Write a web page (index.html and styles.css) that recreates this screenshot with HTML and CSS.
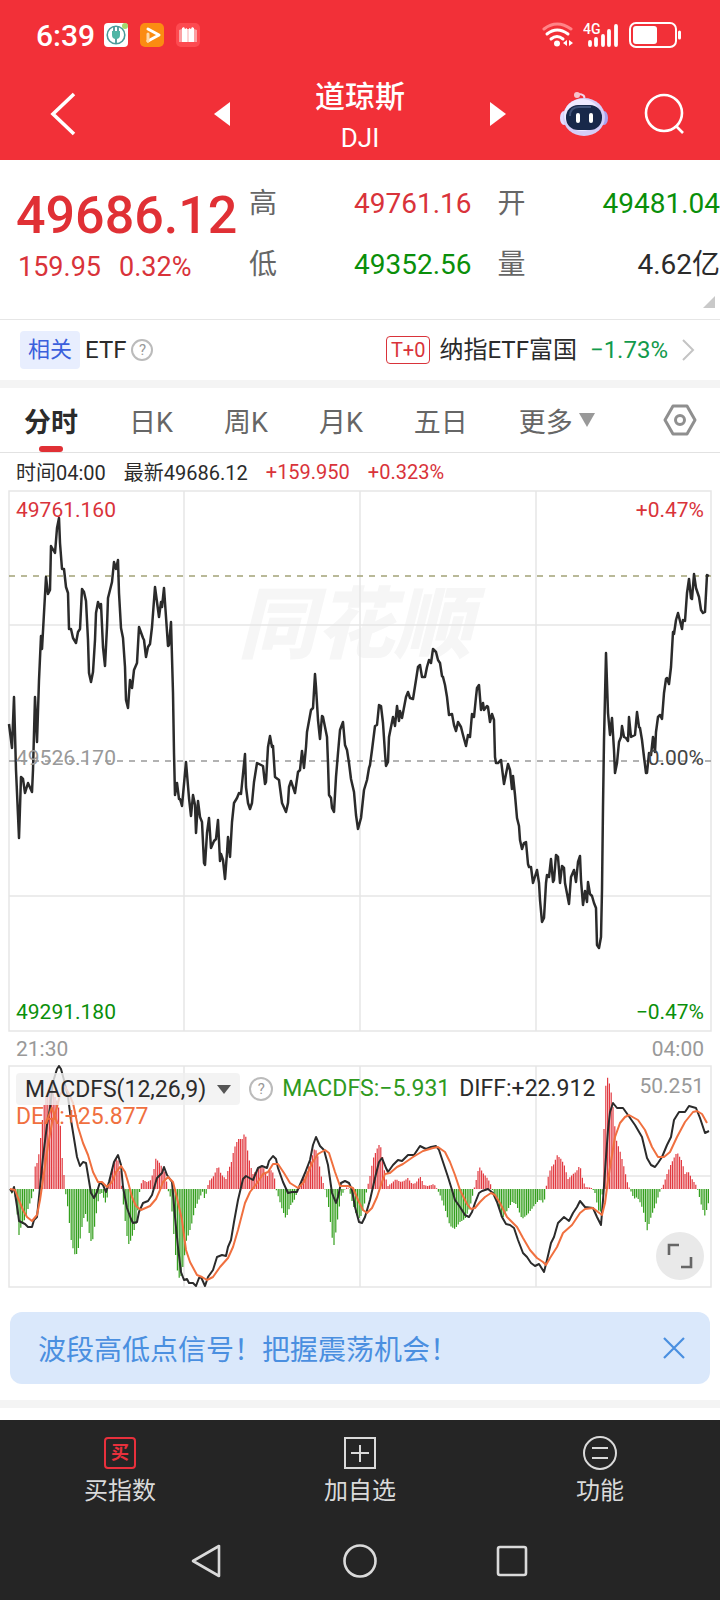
FILE: index.html
```html
<!DOCTYPE html>
<html lang="zh-CN">
<head>
  <meta charset="UTF-8">
  <meta name="viewport" content="width=device-width, initial-scale=1.0">
  <title>道琼斯 DJI</title>
  <link rel="stylesheet" href="styles.css">
</head>
<body>
  <!-- Header -->
  <header class="header">
    <div class="status-bar">
      <span class="clock">6:39</span>
      <svg class="app-icon" viewBox="0 0 24 24">
        <rect width="24" height="24" rx="4" fill="#fff"/>
        <circle cx="12" cy="12" r="8.8" fill="none" stroke="#4b9a9a" stroke-width="1.6"/>
        <path d="M10 3v6M14 3v6M12 10v11" stroke="#4b9a9a" stroke-width="1.8"/>
        <path d="M8 8h8v4a4 4 0 0 1-8 0z" fill="#4fb5a5"/>
        <circle cx="21" cy="3" r="3" fill="#a5d86e"/>
      </svg>
      <svg class="app-icon" viewBox="0 0 24 24">
        <rect width="24" height="24" rx="5" fill="#fb8c12"/>
        <path d="M8 6l11 6-11 6" fill="none" stroke="#fff" stroke-width="3" stroke-linejoin="round" stroke-linecap="round"/>
        <path d="M8 11v7" stroke="#ffd9a8" stroke-width="3" stroke-linecap="round"/>
      </svg>
      <svg class="app-icon" viewBox="0 0 24 24">
        <rect width="24" height="24" rx="5" fill="#fd4a50"/>
        <path d="M3 7l3-1v13H3zM21 7l-3-1v13h3z" fill="#fba0a3"/>
        <path d="M6 5l2-1 1 2 2-1v14H6zM18 5l-2-1-1 2-2-1v14h5z" fill="#fff"/>
        <path d="M11 6h2v13h-2z" fill="#fcd5d6"/>
      </svg>
      <div class="status-right">
        <svg width="32" height="26" viewBox="0 0 32 26" fill="none" stroke="#fff" stroke-width="3" stroke-linecap="round">
          <path d="M2 7q13-10 27 0" stroke="#ff8488"/>
          <path d="M5 12q10-8 21 0M9 17q6-5 12 0"/>
          <circle cx="15" cy="21.500" r="3" fill="#fff" stroke="none"/>
          <path d="M25 18v6l-4-3zM27 18v6l4-3z" fill="#fff" stroke="none"/>
        </svg>
        <svg width="36" height="32" viewBox="0 -3 36 32">
          <text x="0" y="12" class="net-label">4G</text>
          <path d="M7 20v3M13 17v6M20 14v9M26 9v14M33 4v19" stroke="#fff" stroke-width="3.800" stroke-linecap="round"/>
        </svg>
        <svg width="54" height="26" viewBox="0 0 54 26">
          <rect x="2" y="1" width="46" height="24" rx="6" fill="none" stroke="#fff" stroke-width="2"/>
          <rect x="5" y="4" width="24" height="18" rx="3" fill="#fff"/>
          <path d="M51.500 10v6" stroke="#fff" stroke-width="3" stroke-linecap="round"/>
        </svg>
      </div>
    </div>
    <div class="title-bar">
      <button class="icon-btn back" aria-label="返回">
        <svg width="28" height="44" viewBox="0 0 28 44"><path d="M24 2L3 22l21 20" fill="none" stroke="#fff" stroke-width="3.600"/></svg>
      </button>
      <button class="icon-btn" aria-label="上一个">
        <svg width="16" height="24" viewBox="0 0 16 24"><path d="M16 0v24L0 12z" fill="#fff"/></svg>
      </button>
      <div class="title">
        <h1>道琼斯</h1>
        <span class="symbol">DJI</span>
      </div>
      <button class="icon-btn" aria-label="下一个">
        <svg width="16" height="24" viewBox="0 0 16 24"><path d="M0 0v24l16-12z" fill="#fff"/></svg>
      </button>
      <div class="title-tools">
        <button class="icon-btn" aria-label="智能助手">
          <svg width="48" height="46" viewBox="0 0 48 46">
            <path d="M24 9q2-6-6-6" fill="none" stroke="#f0d5ec" stroke-width="2"/>
            <circle cx="17" cy="4" r="3" fill="#f6c3cd"/>
            <ellipse cx="4" cy="27" rx="4" ry="7" fill="#e4ddff"/>
            <ellipse cx="44" cy="27" rx="4" ry="7" fill="#a9a2ee"/>
            <ellipse cx="24" cy="26" rx="21" ry="19" fill="#d5cef8"/>
            <ellipse cx="22" cy="24" rx="18" ry="16" fill="#efeaff"/>
            <rect x="6" y="14" width="36" height="25" rx="12" fill="#18284a"/>
            <path d="M10 25q0-9 9-9h12" fill="none" stroke="#3f5178" stroke-width="2"/>
            <rect x="16" y="22" width="4" height="10" rx="2" fill="#fff"/>
            <rect x="29" y="22" width="4" height="10" rx="2" fill="#fff"/>
          </svg>
        </button>
        <button class="icon-btn" aria-label="搜索">
          <svg width="42" height="42" viewBox="0 0 42 42" fill="none" stroke="#fff" stroke-width="2.600"><circle cx="20" cy="20" r="18"/><path d="M32 33l7 7"/></svg>
        </button>
      </div>
    </div>
  </header>

  <main>
    <!-- Quote -->
    <section class="quote">
      <div class="quote-main">
        <div class="price">49686.12</div>
        <div class="change"><span>159.95</span><span>0.32%</span></div>
      </div>
      <dl class="quote-list">
        <div><dt>高</dt><dd class="up">49761.16</dd></div>
        <div><dt>开</dt><dd class="down">49481.04</dd></div>
        <div><dt>低</dt><dd class="down">49352.56</dd></div>
        <div><dt>量</dt><dd>4.62亿</dd></div>
      </dl>
      <svg class="corner" width="12" height="12" viewBox="0 0 12 12"><path d="M12 0v12H0z" fill="#c9c9c9"/></svg>
    </section>

    <!-- Related ETF -->
    <section class="related">
      <span class="tag">相关</span>
      <span>ETF</span>
      <button class="help" aria-label="ETF说明">?</button>
      <a class="etf-link" href="#etf">
        <span class="t0">T+0</span>
        <span>纳指ETF富国</span>
        <span class="etf-change">−1.73%</span>
        <svg width="14" height="24" viewBox="0 0 14 24"><path d="M2 2l10 10L2 22" fill="none" stroke="#c4c4c4" stroke-width="2"/></svg>
      </a>
    </section>

    <!-- Period tabs -->
    <nav class="tabs">
      <button class="tab active">分时</button>
      <button class="tab">日K</button>
      <button class="tab">周K</button>
      <button class="tab">月K</button>
      <button class="tab">五日</button>
      <button class="tab">更多<svg width="16" height="14" viewBox="0 0 16 14"><path d="M0 0h16L8 14z" fill="#999"/></svg></button>
      <button class="tab settings" aria-label="设置">
        <svg width="34" height="32" viewBox="0 0 34 32" fill="none" stroke="#8f8f8f" stroke-width="3" stroke-linejoin="round"><path d="M10 2h14l8 14-8 14H10L2 16z"/><circle cx="17" cy="16" r="4.500"/></svg>
      </button>
    </nav>

    <div class="info">
      <span>时间04:00</span>
      <span>最新49686.12</span>
      <span class="up">+159.950</span>
      <span class="up">+0.323%</span>
    </div>

    <!-- Price chart -->
    <svg class="chart" viewBox="0 0 720 542">
      <text x="238" y="162" class="watermark">同花顺</text>
      <path class="grid" d="M9 1H711V541H9zM184 1V541M360 1V541M536 1V541M9 135H711M9 406H711"/>
      <path class="dash last" d="M9 86H711"/>
      <path class="dash" d="M9 271H711"/>
      <polyline id="price-line" class="line price-line"/>
      <text x="16" y="27" class="label up">49761.160</text>
      <text x="16" y="275" class="label muted">49526.170</text>
      <text x="16" y="529" class="label down">49291.180</text>
      <text x="704" y="27" class="label end up">+0.47%</text>
      <text x="704" y="275" class="label end">0.00%</text>
      <text x="704" y="529" class="label end down">−0.47%</text>
    </svg>
    <div class="axis"><span>21:30</span><span>04:00</span></div>

    <!-- MACD chart -->
    <section class="macd">
      <svg class="chart" viewBox="0 0 720 223">
        <path class="grid" d="M9 1H711V222H9zM184 1V222M360 1V222M536 1V222M9 111H711"/>
        <path id="bars-up" class="bars bars-up"/>
        <path id="bars-down" class="bars bars-down"/>
        <polyline id="diff-line" class="line"/>
        <polyline id="dea-line" class="line dea-line"/>
        <text x="704" y="28" class="label end muted">50.251</text>
      </svg>
      <div class="legend">
        <button class="indicator">MACDFS(12,26,9)<svg width="14" height="9" viewBox="0 0 14 9"><path d="M0 0h14L7 9z" fill="#555"/></svg></button>
        <button class="help" aria-label="指标说明">?</button>
        <span class="macd-value">MACDFS:−5.931</span>
        <span>DIFF:+22.912</span>
        <span class="dea-value">DEA:+25.877</span>
      </div>
      <button class="expand" aria-label="全屏">
        <svg width="26" height="26" viewBox="0 0 26 26" fill="none" stroke="#666" stroke-width="2.600"><path d="M2 12V2h10M24 14v10H14"/></svg>
      </button>
    </section>

    <!-- Signal banner -->
    <div class="banner">
      <a href="#signal">波段高低点信号！把握震荡机会！</a>
      <button class="icon-btn" aria-label="关闭">
        <svg width="22" height="22" viewBox="0 0 22 22"><path d="M1 1l20 20M21 1L1 21" stroke="#4a8fe0" stroke-width="2.200"/></svg>
      </button>
    </div>
    <div class="divider"></div>
  </main>

  <!-- Bottom bar -->
  <footer class="footer">
    <nav class="actions">
      <button class="action">
        <svg width="34" height="34" viewBox="0 0 34 34"><rect x="2" y="2" width="30" height="30" rx="3" fill="none" stroke="#e8303c" stroke-width="2"/><text x="17" y="23" class="buy-glyph">买</text></svg>
        买指数
      </button>
      <button class="action">
        <svg width="34" height="34" viewBox="0 0 34 34" fill="none" stroke="#dadada" stroke-width="2"><path d="M2 2h30v30H2zM17 9v17M8 17h18"/></svg>
        加自选
      </button>
      <button class="action">
        <svg width="34" height="34" viewBox="0 0 34 34" fill="none" stroke="#dadada" stroke-width="2"><circle cx="17" cy="17" r="16"/><path d="M9 12h16M9 22h16"/></svg>
        功能
      </button>
    </nav>
    <nav class="system-nav">
      <button class="icon-btn" aria-label="返回"><svg width="36" height="36" viewBox="0 0 36 36"><path d="M29 3v30L3 18z"/></svg></button>
      <button class="icon-btn" aria-label="主页"><svg width="36" height="36" viewBox="0 0 36 36"><circle cx="18" cy="18" r="15.500"/></svg></button>
      <button class="icon-btn" aria-label="最近任务"><svg width="36" height="36" viewBox="0 0 36 36"><rect x="4" y="4" width="28" height="28" rx="2"/></svg></button>
    </nav>
  </footer>

  <script src="chart.js"></script>
</body>
</html>
```
FILE: chart.js
```js
// Chart data, "x,y" pairs in viewBox units
const price = `9,234 12,258 14,207 16,280 19,348 21,287 23,289 25,303 28,293 32,302 33,280 35,207 37,252 39,190 41,146 42,159 44,123 46,87 48,104 50,100
51,56 55,63 57,38 59,28 60,53 62,79 64,79 66,97 68,103 69,139 71,139 73,148 76,153 78,142 80,139 82,99 84,102 86,111 88,150 89,183 91,192 93,182 95,150
96,123 98,112 100,118 101,114 103,157 105,176 107,137 108,108 112,92 114,72 116,79 118,70 119,103 121,138 123,148 125,177 126,210 128,218 130,190 132,198
134,180 137,173 139,137 143,148 144,150 146,167 148,157 150,154 152,137 155,97 159,127 161,112 162,117 164,98 168,156 169,155 171,132 173,203 174,263
175,305 177,293 179,309 180,309 182,316 186,272 189,308 191,326 193,305 195,315 196,343 198,311 200,327 202,332 204,373 205,375 207,343 209,328 211,358
214,351 216,349 218,330 220,371 221,364 223,370 225,389 227,363 228,347 230,367 232,332 234,313 237,308 239,303 241,304 245,264 246,297 248,313 250,319
252,313 254,292 257,273 263,276 265,294 266,292 268,257 270,246 272,257 273,256 275,287 279,290 282,313 286,322 288,313 289,297 291,291 295,303 298,282
300,280 302,261 304,278 306,257 307,242 311,220 313,218 315,184 316,197 318,230 320,249 322,226 323,227 327,247 328,273 329,305 331,308 332,318 334,322
336,287 338,263 340,240 343,232 345,255 347,260 349,273 351,289 354,302 356,325 358,339 361,328 364,300 367,290 369,278 370,275 372,260 375,236 377,235
379,215 381,216 383,233 385,263 386,276 388,272 389,247 393,227 395,236 397,216 399,231 400,221 402,228 406,207 408,202 410,208 413,209 416,190 418,177
420,175 422,187 425,187 427,177 429,170 431,173 433,159 436,162 438,170 440,173 442,186 443,187 445,195 447,207 449,225 452,224 454,235 456,241 458,232
461,237 463,245 466,256 468,245 470,247 472,224 474,227 476,207 477,198 479,195 481,220 483,213 484,220 487,216 488,217 490,232 492,224 494,230 495,267
496,273 498,273 501,270 504,294 508,274 510,280 512,299 513,286 515,305 517,328 519,336 520,350 522,359 524,353 526,352 528,374 529,377 531,377 533,393
537,380 539,393 540,410 542,432 544,428 546,393 547,385 549,387 551,369 553,392 554,390 556,365 558,367 560,393 562,376 564,378 565,393 569,414 571,387
574,380 576,392 578,372 580,366 581,390 583,415 585,401 587,412 588,392 590,404 592,406 594,413 596,418 597,455 599,458 601,447 602,400 603,317 604,250
606,163 608,223 610,245 612,228 614,260 615,283 617,273 619,252 621,247 622,236 624,247 626,248 628,251 629,227 631,247 635,245 637,222 639,237 640,238
642,250 644,267 646,283 647,283 649,263 651,265 653,247 655,262 656,242 658,227 660,225 662,229 664,203 666,189 667,188 669,194 671,177 673,142 674,144
676,130 678,123 682,139 683,130 685,131 687,103 689,89 691,108 692,109 694,84 696,98 699,107 701,120 703,123 705,122 707,85 709,86`;

const diff = `10,124 12,127 14,122 16,135 18,148 19,156 25,159 28,162 32,162 34,155 37,152 39,132 43,92 47,60 50,43 53,17 57,4 59,1 61,4 64,15 68,32 71,55 77,92
80,101 83,97 86,98 88,110 91,128 94,133 97,127 100,117 103,120 106,127 109,117 114,97 118,90 121,100 123,122 127,143 131,154 133,158 137,157 139,147
143,138 148,136 152,130 154,123 157,113 162,108 164,102 167,110 172,117 175,152 178,182 181,207 184,215 187,214 189,218 193,218 196,221 199,213 201,212
205,221 208,212 213,205 217,192 222,190 226,191 228,182 231,175 234,157 238,135 243,114 246,111 253,115 258,103 262,101 267,103 269,96 273,91 276,94
278,103 283,117 288,128 292,127 297,127 299,122 305,108 310,95 313,80 316,72 320,81 324,85 328,100 332,128 336,138 338,132 341,118 345,116 349,118
352,125 355,142 359,157 362,158 365,152 370,135 375,113 379,97 382,93 386,103 388,107 393,100 398,95 402,96 408,90 414,90 420,81 426,84 431,82 436,81
439,85 443,97 448,112 452,125 455,135 460,142 465,150 469,152 472,147 475,138 479,128 482,126 488,124 493,128 497,137 502,152 506,159 510,160 514,163
518,175 523,188 527,192 531,198 535,201 539,199 544,207 547,195 551,178 554,172 558,158 564,152 569,156 573,148 577,142 580,136 585,142 593,143 597,152
601,160 603,135 606,92 608,65 610,47 613,38 617,43 623,43 628,50 635,60 642,72 647,93 651,100 655,102 658,98 662,92 667,80 671,72 674,55 679,47 685,47
689,41 696,43 700,53 705,68 709,66`;

const dea = `10,124 15,125 18,133 23,145 27,152 32,156 37,150 40,135 44,108 48,80 52,58 57,42 60,30 65,22 68,27 73,38 78,62 83,78 88,90 93,107 98,117 102,117
107,122 112,117 116,107 121,101 125,107 128,117 132,132 136,141 141,145 150,141 156,134 160,125 163,117 168,112 173,117 177,133 182,155 186,185 190,197
197,210 202,212 207,215 213,212 220,202 228,193 233,182 238,165 245,138 250,127 257,118 263,109 268,107 273,99 278,99 284,108 290,118 298,123 304,117
312,98 318,89 325,85 329,88 335,107 340,121 348,121 353,123 358,135 363,145 367,148 372,143 377,132 382,117 385,109 390,108 397,102 403,99 413,92 423,86
433,83 438,82 445,87 450,97 455,110 460,125 467,139 471,144 475,143 480,137 485,132 491,128 495,130 500,138 507,152 517,162 523,173 530,185 537,193
543,197 546,200 550,193 557,182 563,168 572,160 580,148 585,144 593,143 598,147 602,150 605,138 608,115 612,90 615,72 620,58 625,52 629,50 638,55 645,65
652,82 658,92 664,92 670,87 677,72 685,57 693,47 697,46 702,49 707,58`;

// Histogram heights, positive is up
const bars = `10,0 12,-5 14,1 16,-12 19,-46 21,-38 25,-30 28,-20 32,-8 34,0 35,22 38,28 40,45 43,75 45,90 49,100 52,98 57,88 59,80 61,56 62,33 64,14 65,0
68,-20 71,-50 74,-64 76,-67 79,-57 82,-38 85,-23 87,-30 89,-43 91,-52 93,-50 96,-27 98,-13 100,-5 102,-4 104,-10 106,-15 108,-4 109,3 113,25 117,32
119,25 121,8 122,0 124,-22 127,-47 129,-56 132,-48 136,-35 139,-12 140,3 143,9 147,7 151,9 154,20 155,31 159,27 162,22 165,17 167,5 168,-1 171,-10
175,-60 177,-80 180,-92 184,-72 186,-53 191,-38 195,-20 200,-8 203,-2 205,-12 207,0 209,8 213,12 216,18 218,24 221,15 226,10 228,19 231,25 234,40
238,50 243,50 245,59 247,42 250,25 253,15 258,20 263,23 267,12 270,20 274,15 276,0 279,-10 282,-20 286,-30 290,-17 295,-10 298,0 302,8 306,15 310,26
315,42 318,32 321,14 324,3 326,-4 329,-20 332,-48 334,-56 337,-35 339,-20 341,-7 344,-2 346,2 349,0 352,-12 356,-25 360,-30 364,-18 367,0 370,13
373,30 377,40 380,46 383,30 385,14 388,3 392,6 396,10 400,7 404,8 408,11 412,5 416,6 420,13 424,4 428,3 434,5 437,0 440,-6 445,-20 450,-37 455,-40
460,-33 465,-30 470,-18 473,-5 474,0 476,8 479,23 483,16 488,10 491,4 493,-3 497,-13 502,-30 507,-22 512,-13 516,-15 522,-30 528,-25 534,-17 540,-10
544,-15 546,0 547,8 551,22 554,25 557,34 561,30 564,25 568,10 573,15 576,17 580,24 583,8 586,2 592,1 595,-4 598,-20 600,-25 602,-12 603,20 604,60
606,108 608,112 611,98 613,82 616,50 620,38 624,22 628,4 630,0 634,-10 637,-8 641,-15 644,-25 647,-42 651,-28 656,-15 660,-2 663,3 667,15 671,25
677,37 682,28 685,15 688,18 692,10 696,4 698,-2 701,-15 705,-27 709,-12`;

document.getElementById('price-line').setAttribute('points', price);
document.getElementById('diff-line').setAttribute('points', diff);
document.getElementById('dea-line').setAttribute('points', dea);

// Draw one bar per minute, 390 minutes over the session
function drawBars() {
  const zero = 124;
  const step = 1.8;
  const points = bars.trim().split(/\s+/).map(p => p.split(',').map(Number));
  let up = '';
  let down = '';
  let i = 0;

  for (let x = 10; x <= 709; x += step) {
    while (i < points.length - 2 && points[i + 1][0] < x) i++;
    const [x1, v1] = points[i];
    const [x2, v2] = points[i + 1];
    const value = v1 + (v2 - v1) * (x - x1) / (x2 - x1);
    const bar = `M${x.toFixed(1)} ${zero}V${(zero - value).toFixed(1)}`;
    if (value > 0) up += bar;
    else down += bar;
  }

  document.getElementById('bars-up').setAttribute('d', up);
  document.getElementById('bars-down').setAttribute('d', down);
}

drawBars();
```
FILE: styles.css
```css
* {
  box-sizing: border-box;
}

body {
  margin: 0;
  min-height: 100vh;
  display: flex;
  flex-direction: column;
  font-family: Roboto, "Noto Sans CJK SC", sans-serif;
  color: #2b2b2b;
  background: #fff;
}

button {
  font: inherit;
  color: inherit;
  background: none;
  border: none;
  padding: 0;
  cursor: pointer;
}

a {
  color: inherit;
  text-decoration: none;
}

svg {
  display: block;
  flex: none;
}

/* Header */
.header {
  height: 160px;
  background: #f23038;
  color: #fff;
}

.status-bar {
  height: 70px;
  padding: 0 38px 0 36px;
  display: flex;
  align-items: center;
  gap: 12px;
}

.clock {
  margin-right: -3px;
  font-size: 30px;
  font-weight: 500;
}

.app-icon {
  width: 24px;
  height: 24px;
}

.status-right {
  margin-left: auto;
  display: flex;
  align-items: center;
  gap: 9px;
}

.net-label {
  font-size: 14px;
  font-weight: 500;
  fill: #fff;
}

.title-bar {
  height: 90px;
  padding: 0 34px 10px;
  display: grid;
  grid-template-columns: 1fr 16px 260px 16px 1fr;
  align-items: center;
}

.icon-btn {
  display: flex;
  align-items: center;
}

.back {
  margin-left: 16px;
}

.title {
  padding-top: 6px;
  text-align: center;
}

.title h1 {
  margin: 0;
  font-size: 30px;
  line-height: 42px;
  font-weight: 500;
}

.symbol {
  display: block;
  font-size: 26px;
  line-height: 40px;
}

.title-tools {
  display: flex;
  justify-content: flex-end;
  align-items: center;
  gap: 36px;
}

/* Quote */
.quote {
  position: relative;
  height: 160px;
  padding: 24px 0 0 16px;
  display: flex;
  border-bottom: 1px solid #e6e6e6;
}

.quote-main {
  flex: 0 0 233px;
}

.price {
  font-size: 52px;
  line-height: 64px;
  font-weight: 500;
  color: #e03035;
}

.change {
  display: flex;
  gap: 18px;
  padding-left: 2px;
  font-size: 27px;
  line-height: 38px;
  color: #d9333a;
}

.quote-list {
  flex: 1;
  margin: 0;
  display: grid;
  grid-template-columns: 1fr 1fr;
  grid-auto-rows: 40px;
  gap: 21px 26px;
}

.quote-list div {
  display: flex;
  justify-content: space-between;
  font-size: 28px;
  line-height: 40px;
}

.quote-list dt {
  color: #666;
}

.quote-list dd {
  margin: 0;
}

.corner {
  position: absolute;
  right: 5px;
  bottom: 11px;
}

/* Related ETF */
.related {
  height: 68px;
  padding: 0 25px 0 20px;
  display: flex;
  align-items: center;
  gap: 5px;
  font-size: 24px;
  line-height: 36px;
  border-bottom: 8px solid #f4f4f4;
}

.tag {
  padding: 0 8px;
  line-height: 38px;
  font-size: 22px;
  color: #3a5fdc;
  background: #e8eefe;
  border-radius: 4px;
}

.help {
  width: 22px;
  height: 22px;
  border: 2px solid #bbb;
  border-radius: 50%;
  font-size: 15px;
  line-height: 18px;
  color: #999;
}

.etf-link {
  margin-left: auto;
  display: flex;
  align-items: center;
  gap: 13px;
}

.t0 {
  margin-right: -4px;
  padding: 0 4px;
  font-size: 20px;
  line-height: 26px;
  color: #d9333a;
  border: 1px solid #d9333a;
  border-radius: 4px;
}

.etf-change {
  color: #129a4c;
}

/* Tabs */
.tabs {
  height: 65px;
  padding: 0 23px 0 24px;
  display: flex;
  gap: 51px;
  border-bottom: 1px solid #e2e2e2;
}

.tab {
  position: relative;
  display: flex;
  align-items: center;
  gap: 6px;
  font-size: 27px;
  color: #666;
}

.tab.active {
  font-weight: 700;
  color: #2b2b2b;
}

.tab.active::after {
  content: "";
  position: absolute;
  left: 50%;
  bottom: 0;
  width: 24px;
  height: 6px;
  margin-left: -12px;
  border-radius: 3px;
  background: #e03035;
}

.settings {
  margin-left: auto;
}

.info {
  height: 37px;
  padding: 0 16px;
  display: flex;
  align-items: center;
  gap: 18px;
  font-size: 20px;
}

/* Charts */
.chart {
  width: 100%;
  height: auto;
}

.grid {
  fill: none;
  stroke: #e6e6e6;
  stroke-width: 1.5;
}

.dash {
  stroke: #999;
  stroke-width: 1.5;
  stroke-dasharray: 6 6;
}

.dash.last {
  stroke: #a3a377;
}

.line {
  fill: none;
  stroke: #2b2b2b;
  stroke-width: 2;
  stroke-linejoin: round;
}

.price-line {
  stroke-width: 2.5;
}

.dea-line {
  stroke: #f0703f;
}

.label {
  font-size: 21px;
  fill: #444;
}

.label.end {
  text-anchor: end;
}

.label.muted {
  fill: #999;
}

.up,
.label.up {
  color: #d9333a;
  fill: #d9333a;
}

.down,
.label.down {
  color: #0a8f0a;
  fill: #0a8f0a;
}

.watermark {
  font-size: 78px;
  font-weight: 900;
  font-style: italic;
  fill: #f6f6f6;
}

.axis {
  height: 33px;
  padding: 0 16px;
  display: flex;
  align-items: center;
  justify-content: space-between;
  font-size: 21px;
  color: #999;
}

.macd {
  position: relative;
}

.bars {
  stroke-width: 1.2;
}

.bars-up {
  stroke: #e23b42;
}

.bars-down {
  stroke: #35a01f;
}

.legend {
  position: absolute;
  top: 8px;
  left: 16px;
  right: 100px;
  display: flex;
  flex-wrap: wrap;
  column-gap: 9px;
  font-size: 23px;
}

.legend span {
  line-height: 32px;
}

.indicator {
  height: 32px;
  padding: 0 9px;
  display: flex;
  align-items: center;
  gap: 11px;
  border-radius: 4px;
  background: rgba(240, 240, 240, 0.8);
}

.legend .help {
  width: 24px;
  height: 24px;
  margin-top: 4px;
  line-height: 20px;
}

.macd-value {
  color: #2f9a1f;
}

.legend .dea-value {
  line-height: 24px;
  color: #f0703f;
}

.expand {
  position: absolute;
  right: 16px;
  bottom: 8px;
  width: 48px;
  height: 48px;
  display: flex;
  align-items: center;
  justify-content: center;
  border-radius: 50%;
  background: #e9e9e9;
}

/* Banner */
.banner {
  margin: 24px 10px 16px;
  padding: 0 25px 0 28px;
  height: 72px;
  display: flex;
  align-items: center;
  justify-content: space-between;
  font-size: 28px;
  color: #4a8fe0;
  background: #dae8fb;
  border-radius: 12px;
}

.divider {
  height: 8px;
  background: #f4f4f4;
}

/* Footer */
.footer {
  margin-top: auto;
  height: 180px;
  color: #dadada;
  background: #252525;
}

.actions {
  height: 102px;
  padding-top: 16px;
  display: grid;
  grid-template-columns: repeat(3, 1fr);
}

.action {
  display: flex;
  flex-direction: column;
  align-items: center;
  gap: 3px;
  font-size: 24px;
  line-height: 36px;
}

.buy-glyph {
  font-size: 18px;
  font-weight: 700;
  text-anchor: middle;
  fill: #e8303c;
}

.system-nav {
  height: 78px;
  display: flex;
  align-items: center;
  justify-content: center;
  gap: 116px;
}

.system-nav svg {
  fill: none;
  stroke: #dadada;
  stroke-width: 2.6;
  stroke-linejoin: round;
}
```
